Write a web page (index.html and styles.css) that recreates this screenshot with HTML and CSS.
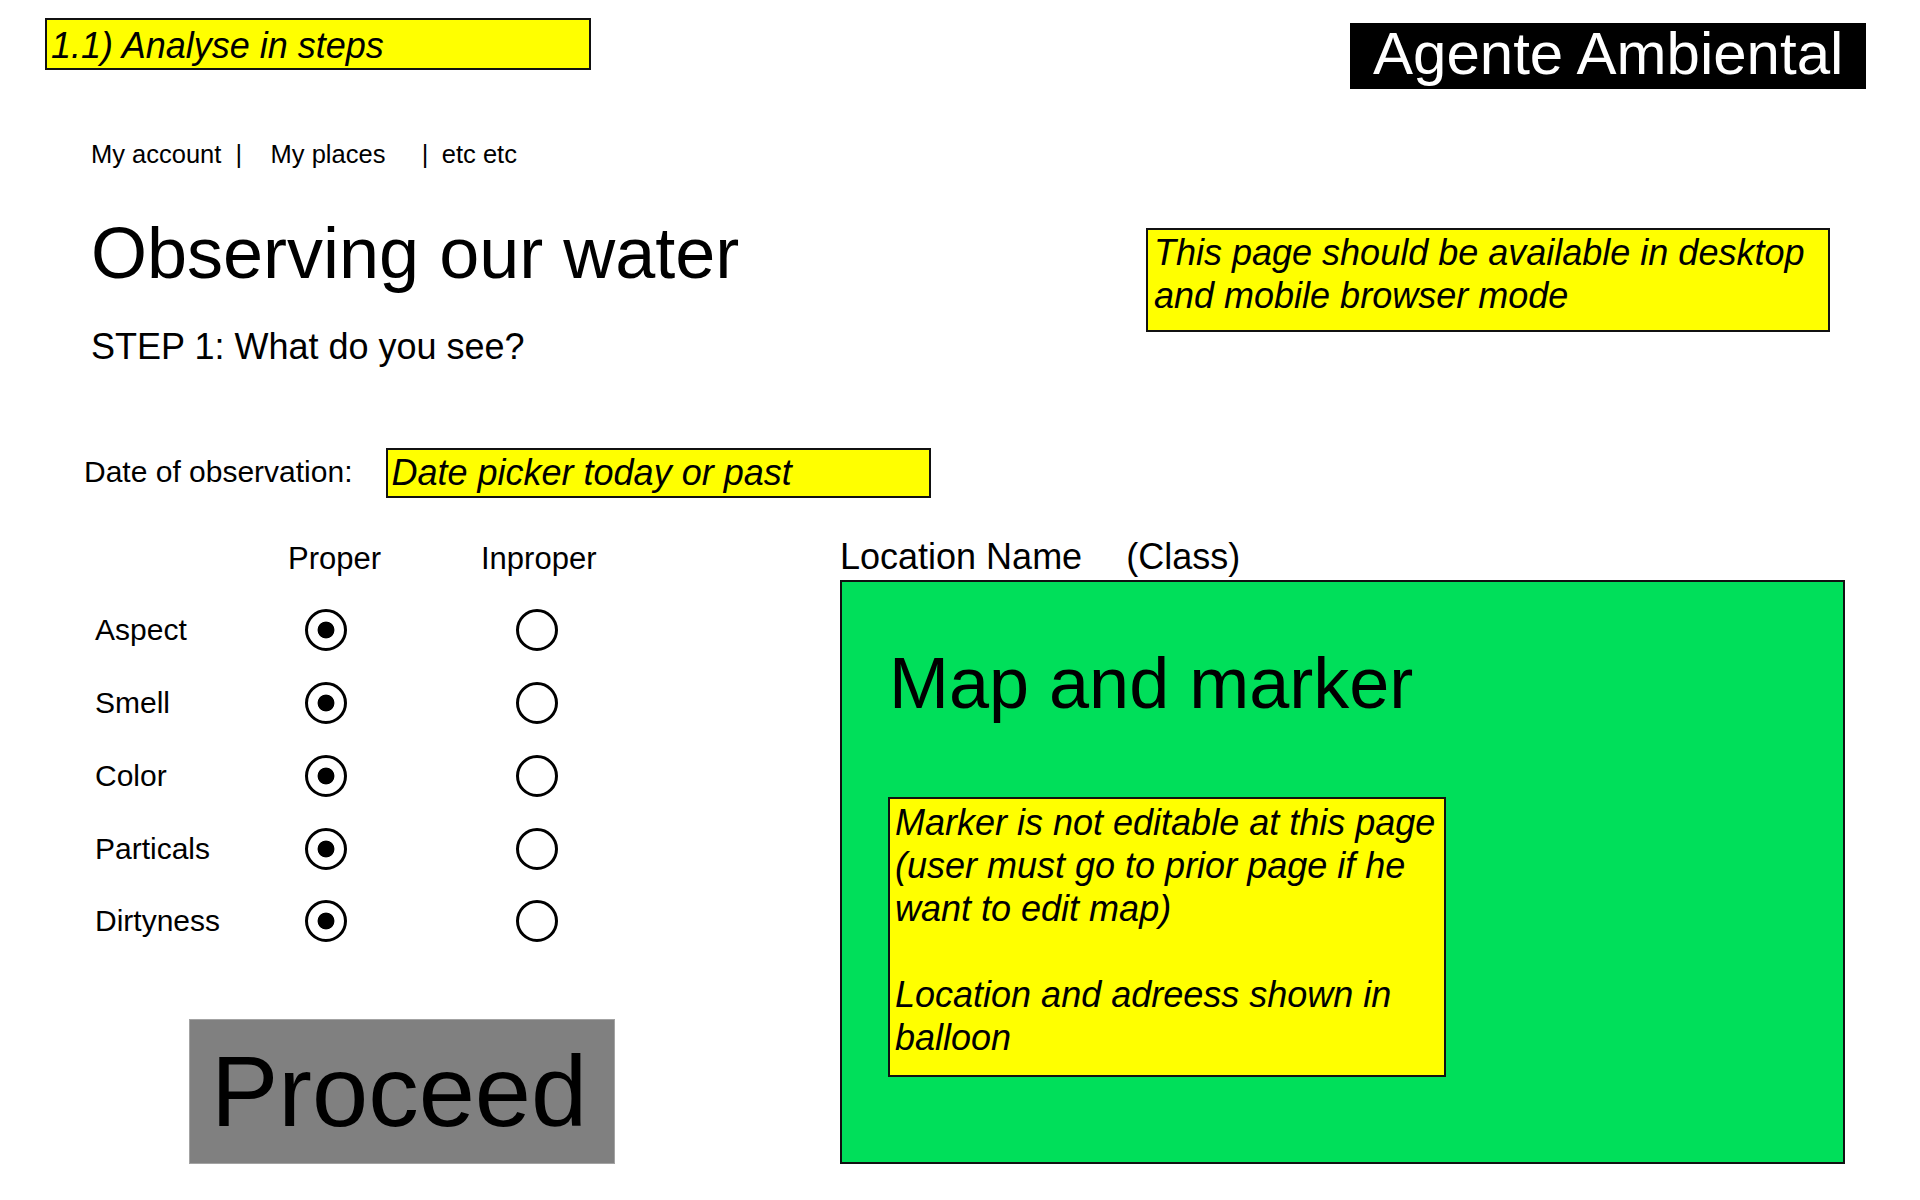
FILE: index.html
```html
<!DOCTYPE html>
<html lang="en">
<head>
  <meta charset="UTF-8" />
  <meta name="viewport" content="width=device-width, initial-scale=1.0" />
  <title>Agente Ambiental - Observing our water</title>
  <link rel="stylesheet" href="styles.css">
</head>
<body>
  <header class="topbar">
    <div class="note tag">1.1) Analyse in steps</div>
    <div class="brand">Agente Ambiental</div>
  </header>

  <section class="intro">
    <div class="intro-main">
      <nav class="menu">
        <a href="#account">My account</a>
        <span class="sep sep-first">|</span>
        <a href="#places" class="places">My places</a>
        <span class="sep sep-second">|</span>
        <a href="#etc" class="etc">etc etc</a>
      </nav>
      <h1 class="title">Observing our water</h1>
      <p class="step">STEP 1: What do you see?</p>
    </div>
    <div class="note device-note">This page should be available in desktop and mobile browser mode</div>
  </section>

  <div class="date-row">
    <label class="date-label" for="obsDate">Date of observation:</label>
    <div class="note date-picker" id="obsDate">Date picker today or past</div>
  </div>

  <main class="observe">
    <form class="checks" onsubmit="return false">
      <div class="grid">
        <span></span>
        <span class="col-head head-proper">Proper</span>
        <span class="col-head head-improper">Inproper</span>

        <span class="row-label">Aspect</span>
        <input type="radio" class="radio" name="aspect" value="proper" checked>
        <input type="radio" class="radio" name="aspect" value="improper">

        <span class="row-label">Smell</span>
        <input type="radio" class="radio" name="smell" value="proper" checked>
        <input type="radio" class="radio" name="smell" value="improper">

        <span class="row-label">Color</span>
        <input type="radio" class="radio" name="color" value="proper" checked>
        <input type="radio" class="radio" name="color" value="improper">

        <span class="row-label">Particals</span>
        <input type="radio" class="radio" name="particals" value="proper" checked>
        <input type="radio" class="radio" name="particals" value="improper">

        <span class="row-label">Dirtyness</span>
        <input type="radio" class="radio" name="dirtyness" value="proper" checked>
        <input type="radio" class="radio" name="dirtyness" value="improper">
      </div>
      <button type="submit" class="proceed">Proceed</button>
    </form>

    <section class="map-col">
      <div class="location">Location Name <span class="class-name">(Class)</span></div>
      <div class="map">
        <h2>Map and marker</h2>
        <div class="note marker-note">
          <p>Marker is not editable at this page (user must go to prior page if he want to edit map)</p>
          <p class="gap">Location and adreess shown in balloon</p>
        </div>
      </div>
    </section>
  </main>
</body>
</html>
```

FILE: styles.css
```css
body {
  margin: 0;
  font-family: 'Liberation Sans', Arial, sans-serif;
  background: #fff;
  color: #000;
}
.note {
  box-sizing: border-box;
  background-color: #ffff00;
  border: 2px solid #111;
  font-style: italic;
  font-size: 36px;
}
.topbar {
  display: flex;
  justify-content: space-between;
  align-items: flex-start;
  padding: 0 54px 0 45px;
}
.tag {
  margin-top: 18px;
  width: 546px;
  height: 52px;
  line-height: 52px;
  padding-left: 4px;
}
.brand {
  margin-top: 23px;
  width: 516px;
  height: 66px;
  box-sizing: border-box;
  padding-left: 23px;
  background-color: #000;
  color: #fff;
  font-size: 60px;
  line-height: 61px;
}
.intro {
  display: flex;
  justify-content: space-between;
  align-items: flex-start;
  padding: 0 90px 0 91px;
}
.menu {
  display: flex;
  margin-top: 50px;
  font-size: 25.5px;
  line-height: 31px;
}
.menu a {
  color: #000;
  text-decoration: none;
}
.sep-first {
  margin-left: 14px;
}
.places {
  margin-left: 28.6px;
}
.sep-second {
  margin-left: 36.4px;
}
.etc {
  margin-left: 13.4px;
}
.title {
  margin: 43px 0 0;
  font-size: 72px;
  font-weight: normal;
  line-height: 80px;
}
.step {
  margin: 33px 0 0;
  font-size: 36px;
  line-height: 42px;
}
.device-note {
  margin-top: 139px;
  width: 684px;
  height: 104px;
  padding: 1px 6px 0;
  line-height: 43px;
}
.date-row {
  display: flex;
  align-items: flex-start;
  margin-top: 80px;
  padding-left: 84px;
}
.date-label {
  font-size: 30px;
  line-height: 48px;
  margin-right: 33px;
}
.date-picker {
  width: 545px;
  height: 50px;
  padding-left: 4px;
  line-height: 45px;
}
.observe {
  display: flex;
  align-items: flex-start;
}
.checks {
  box-sizing: border-box;
  width: 840px;
  padding: 39px 0 0 96px;
  margin: 0;
}
.grid {
  display: grid;
  grid-template-columns: 180px 100px 322px;
  grid-template-rows: 56px repeat(5, 72.75px);
}
.col-head {
  align-self: start;
  justify-self: start;
  font-size: 31px;
  line-height: 44px;
}
.head-proper {
  margin-left: 12px;
}
.head-improper {
  margin-left: 105px;
}
.row-label {
  align-self: center;
  margin: 2px 0 0 -1px;
  font-size: 30px;
}
.radio {
  -webkit-appearance: none;
  appearance: none;
  align-self: center;
  justify-self: center;
  box-sizing: border-box;
  width: 42px;
  height: 42px;
  margin: 2px 0 0;
  border: 3.5px solid #000;
  border-radius: 50%;
  background: #fff;
}
.radio:checked {
  background: radial-gradient(circle, #000 0 8px, #fff 8.8px);
}
.proceed {
  display: block;
  box-sizing: border-box;
  width: 426px;
  height: 145px;
  margin: 62px 0 0 93px;
  padding: 0 0 0 21px;
  border: 1px solid #a3a3a3;
  background-color: #808080;
  color: #000;
  font-family: 'Liberation Sans', Arial, sans-serif;
  font-size: 101px;
  line-height: 136px;
  text-align: left;
  cursor: pointer;
}
.map-col {
  width: 1005px;
  padding-top: 37px;
}
.location {
  font-size: 36px;
  line-height: 43px;
}
.class-name {
  margin-left: 34px;
}
.map {
  box-sizing: border-box;
  margin-top: 2px;
  height: 584px;
  padding: 60px 0 0 42px;
  border: 2px solid #111;
  background-color: #00df5a;
}
.map h2 {
  margin: 0 0 0 5px;
  font-size: 72px;
  font-weight: normal;
  line-height: 82px;
}
.marker-note {
  margin: 73px 0 0 4px;
  width: 558px;
  height: 280px;
  padding: 2px 3px 0 5px;
  line-height: 43px;
}
.marker-note p {
  margin: 0;
}
.marker-note .gap {
  margin-top: 43px;
}
```
